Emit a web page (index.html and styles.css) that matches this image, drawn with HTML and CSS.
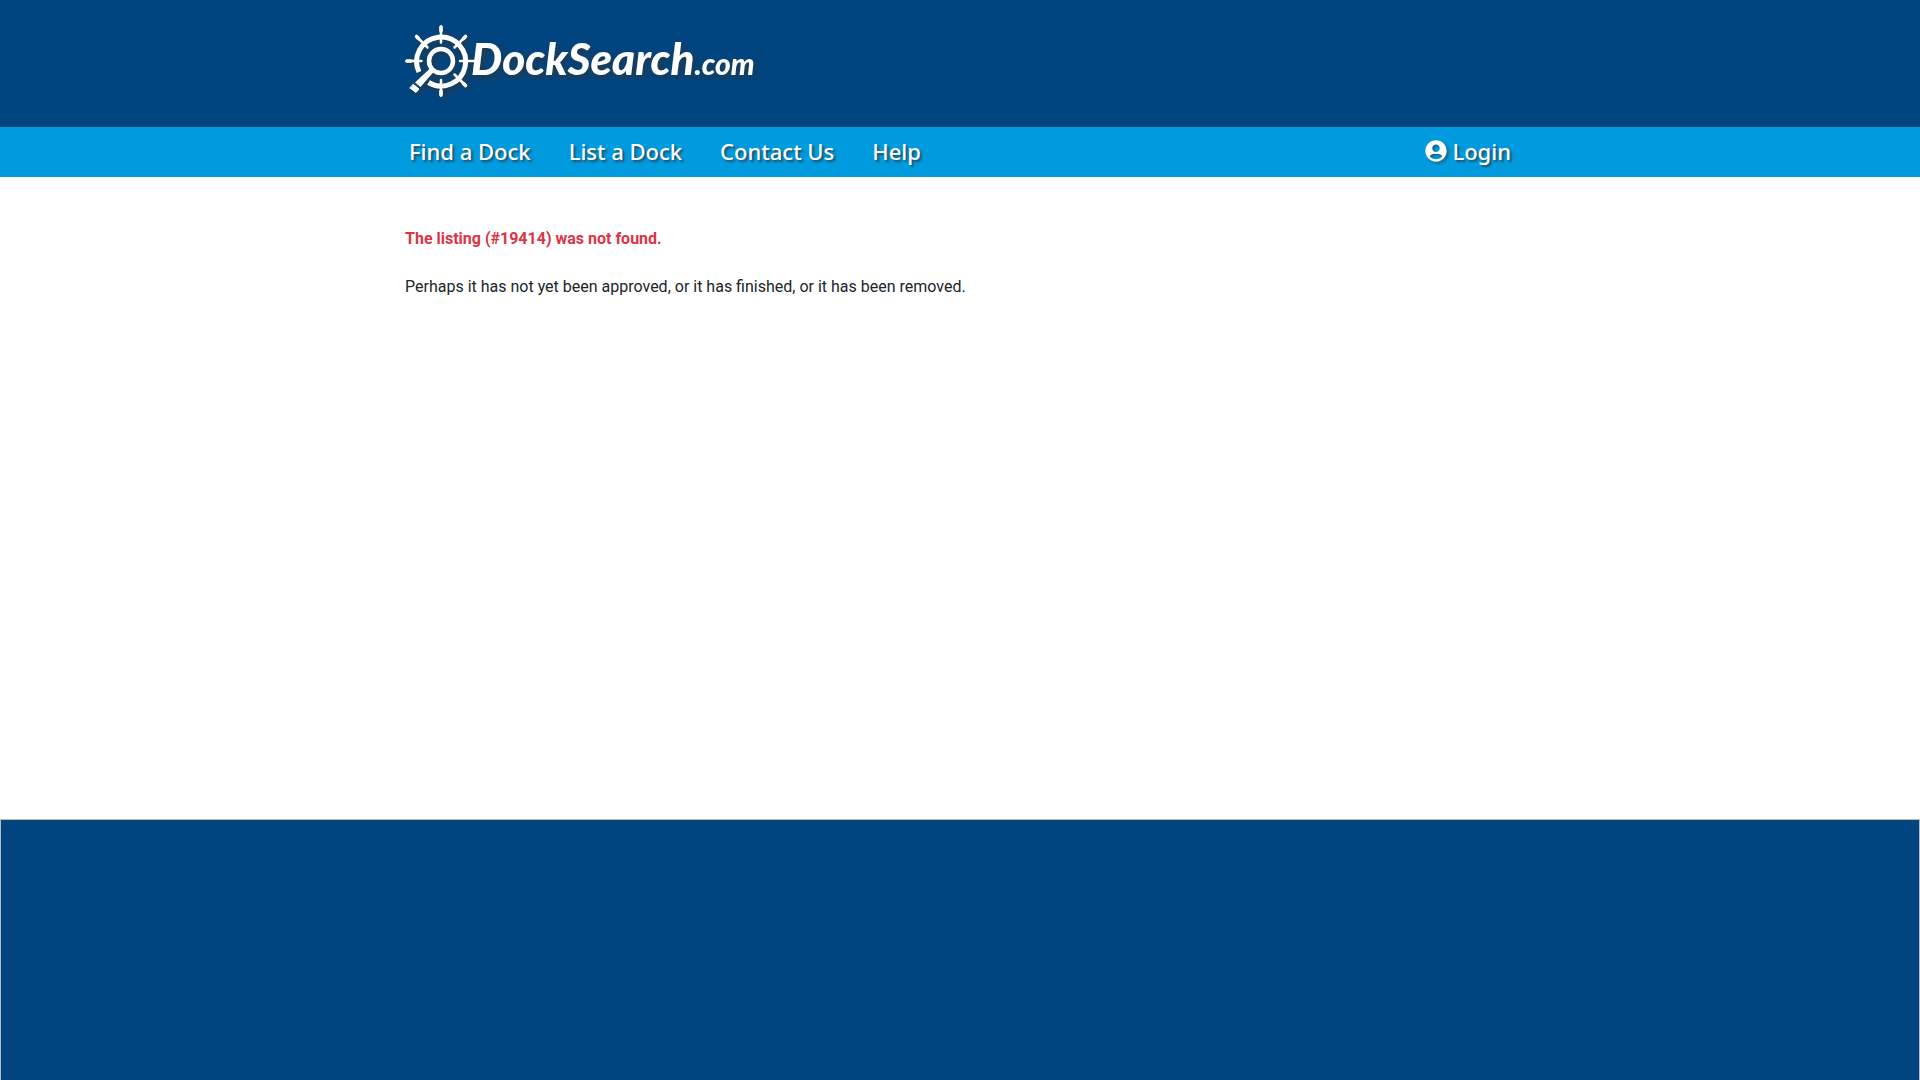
FILE: index.html
```html
<!DOCTYPE html>
<html lang="en">
<head>
<meta charset="utf-8">
<meta name="viewport" content="width=device-width, initial-scale=1">
<title>DockSearch.com</title>
<link rel="stylesheet" href="styles.css">
</head>
<body>
<header class="masthead">
  <div class="container">
    <a class="logo" href="#" aria-label="DockSearch.com">
      <svg class="wheel" viewBox="0 0 72 72" aria-hidden="true" fill="none" stroke="#fff" stroke-linecap="round">
        <path d="M23.500 57.500A24.500 24.500 0 1 0 14 47" stroke-width="5" stroke-linecap="butt"/>
        <path d="M36 1.500v16M1.500 36h15M55 36h15M36 55v15.500M11.500 11.500l11 11M60.500 11.500l-11 11M60.500 60.500l-11-11" stroke-width="2.500"/>
        <path d="M36 2v4M2 36h4M36 66v4M11.500 11.500l2 2M60.500 11.500l-2 2M60.500 60.500l-2-2" stroke-width="3.600"/>
        <circle cx="36" cy="36" r="12" stroke-width="4.500"/>
        <path d="M25.500 43L29 46.500L15.500 62L10 57.500Z" fill="#fff" stroke="none"/>
        <path d="M8.500 59.500L14 64L11 67.500L5 63Z" fill="#fff" stroke="#fff" stroke-width="1" stroke-linejoin="round"/>
      </svg>
      <span class="wordmark">DockSearch<span class="suffix">.com</span></span>
    </a>
  </div>
</header>
<nav class="navbar">
  <div class="container navrow">
    <ul class="menu">
      <li><a href="#">Find a Dock</a></li>
      <li><a href="#">List a Dock</a></li>
      <li><a href="#">Contact Us</a></li>
      <li><a href="#">Help</a></li>
    </ul>
    <a class="login" href="#">
      <svg class="user" viewBox="0 0 496 512" aria-hidden="true"><path fill="currentColor" d="M248 8C111 8 0 119 0 256s111 248 248 248 248-111 248-248S385 8 248 8zm0 96c48.600 0 88 39.400 88 88s-39.400 88-88 88-88-39.400-88-88 39.400-88 88-88zm0 344c-58.700 0-111.300-26.600-146.500-68.200 18.800-35.400 55.600-59.800 98.500-59.800 2.400 0 4.800.4 7.100 1.100 13 4.200 26.600 6.900 40.900 6.900s28-2.700 40.900-6.900c2.300-.7 4.700-1.100 7.100-1.100 42.900 0 79.700 24.400 98.500 59.800C359.300 421.400 306.700 448 248 448z"/></svg>
      <span>Login</span>
    </a>
  </div>
</nav>
<main class="container content">
  <p class="error">The listing (#19414) was not found.</p>
  <p>Perhaps it has not yet been approved, or it has finished, or it has been removed.</p>
</main>
<footer class="footer"></footer>
</body>
</html>
```
FILE: styles.css
```css
* { box-sizing: border-box; }
body {
  margin: 0;
  min-height: 100vh;
  display: flex;
  flex-direction: column;
  font: 16px/24px Roboto, sans-serif;
  color: #212529;
  background: #fff;
}
.container {
  width: 100%;
  max-width: 1140px;
  margin: 0 auto;
  padding: 0 15px;
}
.masthead {
  background: #004580;
  padding: 25px 0 30px;
}
.logo {
  display: inline-flex;
  align-items: flex-start;
  vertical-align: top;
  color: #fff;
  text-decoration: none;
  filter: drop-shadow(3px 3px 3px rgba(50, 50, 50, .7));
}
.wheel { width: 72px; height: 72px; margin-right: -6px; }
.wordmark {
  font: italic 900 44px/66px Lato, sans-serif;
  white-space: nowrap;
}
.suffix { font-size: 30px; line-height: 1; }
.navbar { background: #009ade; }
.navrow {
  display: flex;
  align-items: center;
  justify-content: space-between;
  min-height: 50px;
  padding-bottom: 2px;
}
.menu {
  display: flex;
  gap: 38px;
  margin: 0;
  padding: 0 4px;
  list-style: none;
}
.menu a, .login {
  font: 500 22px/32px "Noto Sans", sans-serif;
  color: #fff;
  text-decoration: none;
  text-shadow: 2px 2px 2px rgba(50, 50, 50, .7);
}
.login {
  display: flex;
  align-items: center;
  gap: 5px;
  padding-right: 4px;
}
.user {
  width: 22px;
  height: 22px;
  filter: drop-shadow(2px 2px 1px rgba(50, 50, 50, .5));
}
.content {
  flex: 1;
  padding-top: 50px;
}
.content p { margin: 0 0 24px; }
.content .error { color: #dc3545; font-weight: 700; }
.footer {
  min-height: 261px;
  background: #004580;
  border: 1px solid #bbb;
  border-bottom: 0;
}
```
